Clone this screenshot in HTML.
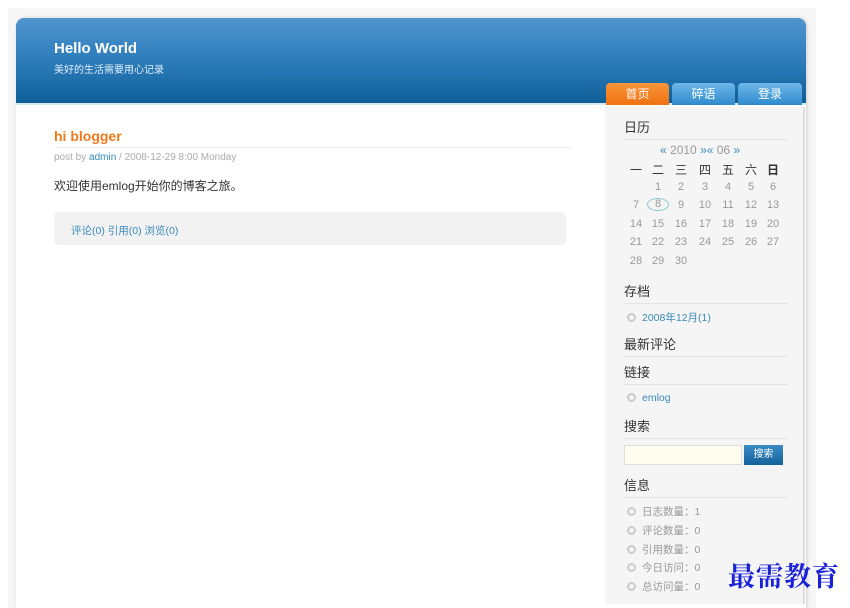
<!DOCTYPE html>
<html><head><meta charset="utf-8"><style>
*{margin:0;padding:0;box-sizing:border-box}
body{width:850px;height:604px;background:#fff;font-family:"Liberation Sans","Noto Sans CJK SC",sans-serif;position:relative;overflow:hidden}
.outer{position:absolute;left:8px;top:8px;width:808px;height:600px;background:#f6f6f6}
.page{position:absolute;left:16px;top:18px;width:790px;height:590px;background:#fff;border-radius:8px 8px 0 0;box-shadow:1px 0 3px #ccc}
.hdr{position:absolute;left:16px;top:18px;width:790px;height:87px;border-radius:8px 8px 0 0;background:linear-gradient(#4f95d0,#2a7ab8 55%,#0f5f98);border-bottom:2px solid #d8e8f0}
.t1{position:absolute;left:54px;top:40px;color:#fff;font-weight:bold;font-size:15px}
.t2{position:absolute;left:54px;top:61px;color:#e0eefa;font-size:10px}
.tab{position:absolute;top:83px;height:22px;width:63px;color:#fff;font-size:12px;text-align:center;line-height:22px;border-radius:4px 4px 0 0;background:linear-gradient(#6fb7ea,#2f8bcd)}
.side{position:absolute;left:605px;top:107px;width:200px;height:497px;background:#f5f5f5;border-right:2px solid #ddd}
.h{position:absolute;left:624px;font-size:13px;color:#333;width:164px;border-bottom:1px solid #e4e4e4;padding-bottom:3px}
.a{color:#3a8ab8}
.c{position:absolute;font-size:11px;color:#999;width:22px;text-align:center}
.dot{display:inline-block;width:9px;height:9px;border:2px solid #ccc;border-radius:50%;margin-right:6px;vertical-align:-1px}
.li{position:absolute;left:627px;font-size:10.5px;color:#999}
</style></head><body>
<div class="outer"></div>
<div class="page"></div>
<div class="hdr"></div>
<div class="t1">Hello World</div>
<div class="t2">美好的生活需要用心记录</div>
<div class="tab" style="left:606px;background:linear-gradient(#f9963a,#f07010)">首页</div>
<div class="tab" style="left:672px">碎语</div>
<div class="tab" style="left:738px;width:64px">登录</div>
<div class="side"></div>

<div style="position:absolute;left:54px;top:128px;color:#f07a1a;font-weight:bold;font-size:14px">hi blogger</div>
<div style="position:absolute;left:54px;top:147px;width:518px;border-top:1px solid #eee"></div>
<div style="position:absolute;left:54px;top:152px;font-size:10px;color:#aaa">post by <span class="a">admin</span> / 2008-12-29 8:00 Monday</div>
<div style="position:absolute;left:54px;top:177px;font-size:12px;color:#333">欢迎使用emlog开始你的博客之旅。</div>
<div style="position:absolute;left:54px;top:212px;width:512px;height:33px;background:#f2f2f2;border-radius:5px"></div>
<div style="position:absolute;left:71px;top:223px;font-size:10.5px" class="a">评论(0) 引用(0) 浏览(0)</div>

<div class="h" style="top:117px">日历</div>
<div style="position:absolute;left:660px;top:143px;font-size:12px;color:#999"><span class="a">«</span> 2010 <span class="a">»«</span> 06 <span class="a">»</span></div>
<div class="c" style="left:625px;top:161px;color:#333;font-size:12px">一</div><div class="c" style="left:647px;top:161px;color:#333;font-size:12px">二</div><div class="c" style="left:670px;top:161px;color:#333;font-size:12px">三</div><div class="c" style="left:694px;top:161px;color:#333;font-size:12px">四</div><div class="c" style="left:717px;top:161px;color:#333;font-size:12px">五</div><div class="c" style="left:740px;top:161px;color:#333;font-size:12px">六</div><div class="c" style="left:762px;top:161px;color:#333;font-size:12px;font-weight:bold">日</div>
<div class="c" style="left:647px;top:181px">1</div><div class="c" style="left:670px;top:181px">2</div><div class="c" style="left:694px;top:181px">3</div><div class="c" style="left:717px;top:181px">4</div><div class="c" style="left:740px;top:181px">5</div><div class="c" style="left:762px;top:181px">6</div>
<div class="c" style="left:625px;top:199px">7</div><div class="c" style="left:647px;border:1px solid #8cc;border-radius:50%;height:13px;line-height:11px;top:198px">8</div><div class="c" style="left:670px;top:199px">9</div><div class="c" style="left:694px;top:199px">10</div><div class="c" style="left:717px;top:199px">11</div><div class="c" style="left:740px;top:199px">12</div><div class="c" style="left:762px;top:199px">13</div>
<div class="c" style="left:625px;top:218px">14</div><div class="c" style="left:647px;top:218px">15</div><div class="c" style="left:670px;top:218px">16</div><div class="c" style="left:694px;top:218px">17</div><div class="c" style="left:717px;top:218px">18</div><div class="c" style="left:740px;top:218px">19</div><div class="c" style="left:762px;top:218px">20</div>
<div class="c" style="left:625px;top:236px">21</div><div class="c" style="left:647px;top:236px">22</div><div class="c" style="left:670px;top:236px">23</div><div class="c" style="left:694px;top:236px">24</div><div class="c" style="left:717px;top:236px">25</div><div class="c" style="left:740px;top:236px">26</div><div class="c" style="left:762px;top:236px">27</div>
<div class="c" style="left:625px;top:255px">28</div><div class="c" style="left:647px;top:255px">29</div><div class="c" style="left:670px;top:255px">30</div>

<div class="h" style="top:281px">存档</div>
<div class="li" style="top:310px"><span class="dot"></span><span class="a">2008年12月(1)</span></div>
<div class="h" style="top:334px">最新评论</div>
<div class="h" style="top:362px">链接</div>
<div class="li" style="top:392px"><span class="dot"></span><span class="a">emlog</span></div>
<div class="h" style="top:416px">搜索</div>
<div style="position:absolute;left:624px;top:445px;width:118px;height:20px;background:#fdfdf0;border:1px solid #ddd"></div>
<div style="position:absolute;left:744px;top:445px;width:39px;height:20px;background:linear-gradient(#3a8ac4,#14629c);color:#fff;font-size:10px;text-align:center;line-height:20px">搜索</div>
<div class="h" style="top:475px">信息</div>
<div class="li" style="top:504px"><span class="dot"></span>日志数量：1</div>
<div class="li" style="top:523px"><span class="dot"></span>评论数量：0</div>
<div class="li" style="top:542px"><span class="dot"></span>引用数量：0</div>
<div class="li" style="top:560px"><span class="dot"></span>今日访问：0</div>
<div class="li" style="top:579px"><span class="dot"></span>总访问量：0</div>
<div style="position:absolute;left:728px;top:555px;font-size:27px;color:#1a22d8;font-family:'Noto Serif CJK SC',serif;font-weight:bold;letter-spacing:1px">最需教育</div>
</body></html>
